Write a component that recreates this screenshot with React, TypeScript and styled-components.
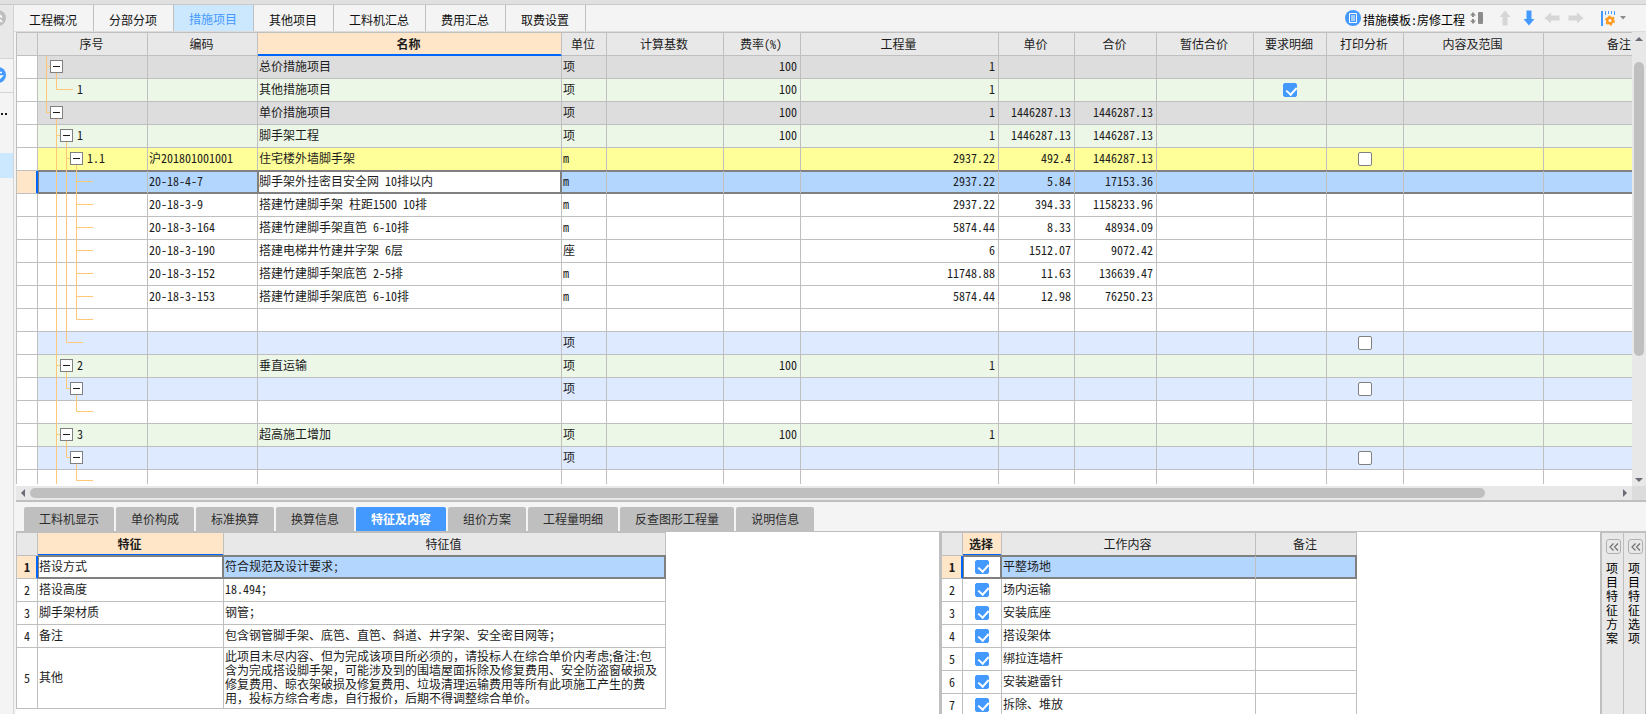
import React from "react";
import styled, { createGlobalStyle, css } from "styled-components";

const LINE = "#bfbfbf";
const DARK = "#808080";
const BLUE = "#4499ff";

const Global = createGlobalStyle`
  * { box-sizing: border-box; }
  html, body, #root { height: 100%; }
  body {
    margin: 0;
    overflow: hidden;
    background: #f4f4f4;
    color: #1c1c1c;
    font-family: "Noto Sans CJK SC", "Liberation Sans", sans-serif;
    font-size: 12px;
    line-height: 14px;
    font-feature-settings: "hwid";
    text-spacing-trim: space-all;
  }
  button { font: inherit; font-feature-settings: inherit; color: inherit; border: 0; padding: 0; background: none; }
`;

const Shell = styled.div`
  height: 100vh;
  display: flex;
  flex-direction: column;
`;
const TopStrip = styled.div`
  flex: 0 0 5px;
  background: #e0e0e0;
  border-bottom: 1px solid #cacaca;
`;
const Body = styled.div`
  flex: 1;
  min-height: 0;
  display: flex;
`;
const Rail = styled.aside`
  flex: 0 0 14px;
  border-right: 1px solid #d4d4d4;
  overflow: hidden;
`;
const RailSlot = styled.div<{ $h: number; $bg?: string; $line?: boolean }>`
  height: ${(p) => p.$h}px;
  background: ${(p) => p.$bg || "transparent"};
  border-bottom: ${(p) => (p.$line ? "1px solid #d4d4d4" : "0")};
  line-height: ${(p) => p.$h}px;
  svg { display: block; }
`;
const Main = styled.main`
  flex: 1;
  min-width: 0;
  display: flex;
  flex-direction: column;
`;
const Toolbar = styled.header`
  flex: 0 0 27px;
  display: flex;
  justify-content: space-between;
  border-bottom: 1px solid #dcdcdc;
`;
const Tabs = styled.nav`
  display: flex;
`;
const Tab = styled.button<{ $on?: boolean }>`
  padding: ${(p) => (p.$on ? "1px 16px 0 15px" : "3px 16px 0 15px")};
  border-right: 1px solid ${LINE};
  background: ${(p) => (p.$on ? "#cce8ff" : "transparent")};
  color: ${(p) => (p.$on ? BLUE : "#111")};
`;
const Tools = styled.div`
  display: flex;
  align-items: center;
  padding-right: 20px;
`;
const Template = styled.button`
  display: flex;
  align-items: center;
  gap: 2px;
  color: #000;
  margin-right: 12px;
  span { padding-top: 3px; margin-right: 3px; }
`;
const ToolButton = styled.button<{ $gap: number }>`
  display: flex;
  align-items: center;
  gap: 5px;
  margin-left: ${(p) => p.$gap}px;
`;

const UpperPane = styled.section`
  flex: 1;
  min-height: 0;
  display: flex;
  flex-direction: column;
  margin-left: 2px;
  border-bottom: 2px solid ${LINE};
`;
const GridRow = styled.div`
  flex: 1;
  min-height: 0;
  display: flex;
`;
const GridView = styled.div`
  flex: 1;
  min-width: 0;
  overflow: hidden;
  background: #fff;
  border-bottom: 2px solid #fff;
`;

const Table = styled.table<{ $w: number }>`
  table-layout: fixed;
  width: ${(p) => p.$w}px;
  border-collapse: separate;
  border-spacing: 0;
  border-top: 1px solid ${LINE};
  border-left: 1px solid ${LINE};
`;
const Th = styled.th<{ $on?: boolean }>`
  height: 23px;
  padding: 0 2px 0 0;
  border-right: 1px solid ${LINE};
  border-bottom: 1px solid ${LINE};
  background: #e8e8e8;
  font-weight: 400;
  ${(p) =>
    p.$on &&
    css`
      background: #ffe6c8;
      font-weight: 700;
      border-bottom-color: #0066ff;
      box-shadow: inset 0 -1px 0 #0066ff;
    `}
`;
const Td = styled.td<{ $align?: string }>`
  height: 23px;
  padding: 0 3px 2px 1px;
  line-height: 18px;
  border-right: 1px solid ${LINE};
  border-bottom: 1px solid ${LINE};
  text-align: ${(p) => p.$align || "left"};
  vertical-align: middle;
  white-space: nowrap;
`;
const BoxTd = styled(Td)`
  padding: 0;
`;
const ParagraphTd = styled(Td)`
  padding: 1px 4px 3px 1px;
  line-height: 14px;
  white-space: normal;
  font-feature-settings: normal;
`;
const HeadTd = styled(Td)`
  background: #fff;
  text-align: center;
  padding: 0;
`;
const Tr = styled.tr<{ $bg?: string; $sel?: boolean; $focus?: number }>`
  background: ${(p) => (p.$sel ? "#b3d6ff" : p.$bg || "#fff")};
  ${(p) =>
    p.$sel &&
    css`
      ${HeadTd} {
        background: #ffe6c8;
        font-weight: 700;
        border-right-color: #0066ff;
        box-shadow: inset -1px 0 0 #0066ff;
      }
      ${Td}:not(:first-child) {
        border-bottom-color: ${DARK};
        box-shadow: 0 -1px 0 ${DARK}, inset 0 1px 0 ${DARK}, inset 0 -1px 0 ${DARK};
      }
      ${Td}:nth-child(2) {
        box-shadow: 0 -1px 0 ${DARK}, inset 1px 1px 0 ${DARK}, inset 0 -1px 0 ${DARK};
      }
      ${Td}:last-child {
        border-right-color: ${DARK};
        box-shadow: 0 -1px 0 ${DARK}, inset 0 1px 0 ${DARK}, inset -1px -1px 0 ${DARK};
      }
      ${Td}:nth-child(${p.$focus}) {
        background: #fff;
        border-right-color: ${DARK};
        box-shadow: ${p.$focus === 2 ? "" : `-1px 0 0 ${DARK},`} 0 -1px 0 ${DARK}, inset 0 0 0 1px ${DARK};
      }
    `}
`;
const TreeBox = styled.div<{ $x: number }>`
  position: relative;
  display: flex;
  align-items: center;
  height: 22px;
  padding-left: ${(p) => p.$x}px;
`;
const Guides = styled.svg`
  position: absolute;
  left: 0;
  top: 0;
  overflow: visible;
`;
const Toggle = styled.button`
  position: relative;
  width: 13px;
  height: 13px;
  margin-bottom: 1px;
  border: 1px solid ${DARK};
  background: linear-gradient(#1c1c1c, #1c1c1c) center / 7px 1px no-repeat #fff;
`;
const TreeLabel = styled.span`
  margin: 0 0 2px 4px;
`;
const Check = styled.input`
  appearance: none;
  display: block;
  position: relative;
  width: 14px;
  height: 14px;
  margin: 0 auto;
  border: 1px solid ${DARK};
  border-radius: 2px;
  background: #fff;
  &:checked { background: ${BLUE}; border-color: ${BLUE}; }
  &:checked::after {
    content: "";
    position: absolute;
    left: 4px;
    top: 1px;
    width: 5px;
    height: 8px;
    border: solid #fff;
    border-width: 0 2px 2px 0;
    transform: rotate(42deg);
  }
`;

const VBar = styled.div`
  flex: 0 0 14px;
  display: flex;
  flex-direction: column;
  align-items: center;
  background: #e8e8e8;
  padding: 5px 0 4px;
`;
const VThumb = styled.div`
  width: 10px;
  height: 66%;
  margin: 21px 0 auto;
  border-radius: 5px;
  background: ${LINE};
`;
const HBar = styled.div`
  flex: 0 0 14px;
  display: flex;
  align-items: center;
  background: #e8e8e8;
`;
const HTrack = styled.div`
  flex: 1;
  display: flex;
  align-items: center;
  padding: 0 5px;
`;
const HThumb = styled.div`
  width: calc(91% - 6px);
  height: 10px;
  margin: 0 auto 0 5px;
  border-radius: 5px;
  background: ${LINE};
`;
const Corner = styled.div`
  width: 14px;
  height: 14px;
  background: #dcdcdc;
`;

const LowerPane = styled.section`
  flex: 0 0 212px;
  display: flex;
  flex-direction: column;
  min-height: 0;
  margin-left: 2px;
`;
const LowerTabs = styled.nav`
  display: flex;
  gap: 2px;
  height: 30px;
  padding: 5px 0 0 8px;
  border-bottom: 1px solid ${LINE};
`;
const LowerTab = styled.button<{ $on?: boolean }>`
  padding: 0 15px;
  border-radius: 2px 2px 0 0;
  background: ${(p) => (p.$on ? BLUE : LINE)};
  color: ${(p) => (p.$on ? "#fff" : "#2c2c2c")};
  font-weight: ${(p) => (p.$on ? 700 : 400)};
`;
const Panes = styled.div`
  flex: 1;
  min-height: 0;
  display: flex;
  background: #fff;
`;
const Pane = styled.div`
  flex: 1;
  min-width: 0;
  overflow: hidden;
`;
const WorkPane = styled.div`
  flex: 0 0 661px;
  border-left: 2px solid ${LINE};
  overflow: hidden;
`;
const SideTabs = styled.div`
  display: flex;
  border-left: 2px solid ${LINE};
  border-top: 1px solid ${LINE};
`;
const SideTab = styled.div`
  width: 22px;
  padding: 6px 2px 0 4px;
  background: #e8e8e8;
  border-right: 1px solid ${LINE};
  color: #000;
`;
const Expand = styled.button`
  display: flex;
  align-items: center;
  justify-content: center;
  width: 15px;
  height: 15px;
  border: 1px solid #b0b0b0;
  border-radius: 3px;
`;
const SideLabel = styled.div`
  width: 12px;
  margin-top: 7px;
  line-height: 14px;
  word-break: break-all;
`;

const columns: [string, number][] = [
  ["", 21], ["序号", 110], ["编码", 110], ["名称", 304], ["单位", 45],
  ["计算基数", 117], ["费率(%)", 77], ["工程量", 198], ["单价", 76], ["合价", 82],
  ["暂估合价", 97], ["要求明细", 73], ["打印分析", 77], ["内容及范围", 140], ["备注", 153],
];
const GREY = "#dddddd";
const GREEN = "#ecf7e7";
const YELLOW = "#ffff99";
const PALE = "#deeaff";

type Row = {
  bg?: string;
  guides: string;
  toggle?: number;
  no?: string;
  code?: string;
  name?: string;
  unit?: string;
  rate?: string;
  qty?: string;
  price?: string;
  total?: string;
  detail?: boolean;
  print?: boolean;
  sel?: boolean;
};

const leaf = "M18.5 0V23M28.5 0V23M38.5 0V23M38 10.5H55";
const rows: Row[] = [
  { bg: GREY, guides: "M8.5 0V23M8 10.5H12M18.5 17V23", toggle: 12, name: "总价措施项目", unit: "项", rate: "100", qty: "1" },
  { bg: GREEN, guides: "M8.5 0V23M18.5 0V10.5H35", no: "1", name: "其他措施项目", unit: "项", rate: "100", qty: "1", detail: true },
  { bg: GREY, guides: "M8.5 0V10.5H12M18.5 17V23", toggle: 12, name: "单价措施项目", unit: "项", rate: "100", qty: "1", price: "1446287.13", total: "1446287.13" },
  { bg: GREEN, guides: "M18.5 0V23M18 10.5H22M28.5 17V23", toggle: 22, no: "1", name: "脚手架工程", unit: "项", rate: "100", qty: "1", price: "1446287.13", total: "1446287.13" },
  { bg: YELLOW, guides: "M18.5 0V23M28.5 0V23M28 10.5H32M38.5 17V23", toggle: 32, no: "1.1", code: "沪201801001001", name: "住宅楼外墙脚手架", unit: "m", qty: "2937.22", price: "492.4", total: "1446287.13", print: true },
  { sel: true, guides: leaf, code: "20-18-4-7", name: "脚手架外挂密目安全网 10排以内", unit: "m", qty: "2937.22", price: "5.84", total: "17153.36" },
  { guides: leaf, code: "20-18-3-9", name: "搭建竹建脚手架 柱距1500 10排", unit: "m", qty: "2937.22", price: "394.33", total: "1158233.96" },
  { guides: leaf, code: "20-18-3-164", name: "搭建竹建脚手架直笆 6-10排", unit: "m", qty: "5874.44", price: "8.33", total: "48934.09" },
  { guides: leaf, code: "20-18-3-190", name: "搭建电梯井竹建井字架 6层", unit: "座", qty: "6", price: "1512.07", total: "9072.42" },
  { guides: leaf, code: "20-18-3-152", name: "搭建竹建脚手架底笆 2-5排", unit: "m", qty: "11748.88", price: "11.63", total: "136639.47" },
  { guides: leaf, code: "20-18-3-153", name: "搭建竹建脚手架底笆 6-10排", unit: "m", qty: "5874.44", price: "12.98", total: "76250.23" },
  { guides: "M18.5 0V23M28.5 0V23M38.5 0V10.5H55" },
  { bg: PALE, guides: "M18.5 0V23M28.5 0V10.5H45", unit: "项", print: true },
  { bg: GREEN, guides: "M18.5 0V23M18 10.5H22M28.5 17V23", toggle: 22, no: "2", name: "垂直运输", unit: "项", rate: "100", qty: "1" },
  { bg: PALE, guides: "M18.5 0V23M28.5 0V10.5H32M38.5 17V23", toggle: 32, unit: "项", print: true },
  { guides: "M18.5 0V23M38.5 0V10.5H55" },
  { bg: GREEN, guides: "M18.5 0V23M18 10.5H22M28.5 17V23", toggle: 22, no: "3", name: "超高施工增加", unit: "项", rate: "100", qty: "1" },
  { bg: PALE, guides: "M18.5 0V23M28.5 0V10.5H32M38.5 17V23", toggle: 32, unit: "项", print: true },
  { guides: "M18.5 0V23M38.5 0V10.5H55" },
];

const features: [string, string][] = [
  ["搭设方式", "符合规范及设计要求;"],
  ["搭设高度", "18.494；"],
  ["脚手架材质", "钢管；"],
  ["备注", "包含钢管脚手架、底笆、直笆、斜道、井字架、安全密目网等；"],
  ["其他", "此项目未尽内容、但为完成该项目所必须的，请投标人在综合单价内考虑;备注:包含为完成搭设脚手架，可能涉及到的围墙屋面拆除及修复费用、安全防盗窗破损及修复费用、晾衣架破损及修复费用、垃圾清理运输费用等所有此项施工产生的费用，投标方综合考虑，自行报价，后期不得调整综合单价。"],
];
const works = ["平整场地", "场内运输", "安装底座", "搭设架体", "绑拉连墙杆", "安装避雷针", "拆除、堆放"];

const Cols = ({ widths }: { widths: number[] }) => (
  <colgroup>
    {widths.map((w, i) => (
      <col key={i} width={w} />
    ))}
  </colgroup>
);

const Arrow = ({ dir, color }: { dir: number; color: string }) => (
  <svg width="16" height="16" viewBox="0 0 16 16">
    <path d="M8 0.5L13.5 7H10.5V15.5H5.5V7H2.5Z" fill={color} transform={`rotate(${dir} 8 8)`} />
  </svg>
);
const Tri = ({ d, w, h }: { d: string; w: number; h: number }) => (
  <svg width={w} height={h}>
    <path d={d} fill="#6b6b78" />
  </svg>
);

const MeasureTable = () => (
  <Table $w={1681}>
    <Cols widths={columns.map((c) => c[1])} />
    <thead>
      <tr>
        {columns.map(([label], i) => (
          <Th key={i} $on={label === "名称"}>{label}</Th>
        ))}
      </tr>
    </thead>
    <tbody>
      {rows.map((r, i) => (
        <Tr key={i} $bg={r.bg} $sel={r.sel} $focus={4}>
          <HeadTd />
          <BoxTd>
            <TreeBox $x={r.toggle ?? 35}>
              <Guides width="110" height="22">
                <path d={r.guides} fill="none" stroke="#ffc878" />
              </Guides>
              {r.toggle && <Toggle aria-label="折叠" />}
              {r.no && <TreeLabel>{r.no}</TreeLabel>}
            </TreeBox>
          </BoxTd>
          <Td>{r.code}</Td>
          <Td>{r.name}</Td>
          <Td>{r.unit}</Td>
          <Td />
          <Td $align="right">{r.rate}</Td>
          <Td $align="right">{r.qty}</Td>
          <Td $align="right">{r.price}</Td>
          <Td $align="right">{r.total}</Td>
          <Td />
          <BoxTd>{r.detail && <Check type="checkbox" aria-label="要求明细" defaultChecked />}</BoxTd>
          <BoxTd>{r.print && <Check type="checkbox" aria-label="打印分析" />}</BoxTd>
          <Td />
          <Td />
        </Tr>
      ))}
    </tbody>
  </Table>
);

const upperTabs = ["工程概况", "分部分项", "措施项目", "其他项目", "工料机汇总", "费用汇总", "取费设置"];
const lowerTabs = ["工料机显示", "单价构成", "标准换算", "换算信息", "特征及内容", "组价方案", "工程量明细", "反查图形工程量", "说明信息"];

export default function App() {
  return (
    <Shell>
      <Global />
      <TopStrip />
      <Body>
        <Rail>
          <RailSlot $h={54} $bg="#e8e8e8" $line>
            <svg width="13" height="27">
              <circle cx="-2" cy="13" r="8" fill="#bfbfbf" />
              <path d="M-5 12.5L-1.5 9L2 12.5M-5 17L-1.5 13.5L2 17" fill="none" stroke="#fff" strokeWidth="1.6" />
            </svg>
          </RailSlot>
          <RailSlot $h={34} $line>
            <svg width="13" height="32">
              <circle cx="-2" cy="16" r="8" fill={BLUE} />
              <path d="M-5 13.5H2M-1 17H2L-1 20" fill="none" stroke="#fff" strokeWidth="1.6" />
            </svg>
          </RailSlot>
          <RailSlot $h={60}>
            <svg width="13" height="30">
              <path d="M1 20h2v2h-2zM5 20h2v2h-2z" fill="#1c1c1c" />
            </svg>
          </RailSlot>
          <RailSlot $h={25} $bg="#cce8ff" />
        </Rail>
        <Main>
          <Toolbar>
            <Tabs>
              {upperTabs.map((t) => (
                <Tab key={t} $on={t === "措施项目"}>{t}</Tab>
              ))}
            </Tabs>
            <Tools>
              <Template>
                <svg width="16" height="16">
                  <circle cx="8" cy="8" r="8" fill={BLUE} />
                  <path d="M4.5 3.5h7v9h-7zM6 6h4M6 8h4M6 10h4" fill="none" stroke="#fff" />
                </svg>
                <span>措施模板:房修工程</span>
                <svg width="13" height="14">
                  <path d="M0 4.5L3 1L6 4.5H4V6H2V4.5ZM0 9.5H2V8H4V9.5H6L3 13Z" fill="#8c8c8c" />
                  <rect x="8" y="1" width="5" height="12" rx="1" fill="#8c8c8c" />
                </svg>
              </Template>
              <ToolButton $gap={2} aria-label="上移"><Arrow dir={0} color="#d6d6d6" /></ToolButton>
              <ToolButton $gap={8} aria-label="下移"><Arrow dir={180} color={BLUE} /></ToolButton>
              <ToolButton $gap={7} aria-label="左移"><Arrow dir={270} color="#d6d6d6" /></ToolButton>
              <ToolButton $gap={8} aria-label="右移"><Arrow dir={90} color="#d6d6d6" /></ToolButton>
              <ToolButton $gap={17} aria-label="设置">
                <svg width="14" height="16">
                  <path d="M1 1V16" stroke={BLUE} strokeWidth="2" />
                  <path d="M4.5 1V5M7.5 1V4M10.5 1V4M13.5 1V5" stroke={BLUE} />
                  <circle cx="9" cy="10.5" r="2.8" fill="none" stroke="#ff9a1f" strokeWidth="2.4" />
                  <circle cx="9" cy="10.5" r="4.2" fill="none" stroke="#ff9a1f" strokeWidth="1.6" strokeDasharray="2.2 2.2" />
                </svg>
                <svg width="6" height="4"><path d="M0 0H6L3 3.5Z" fill="#8c8c8c" /></svg>
              </ToolButton>
            </Tools>
          </Toolbar>

          <UpperPane>
            <GridRow>
              <GridView><MeasureTable /></GridView>
              <VBar>
                <Tri w={8} h={4} d="M0 4H8L4 0Z" />
                <VThumb />
                <Tri w={8} h={4} d="M0 0H8L4 4Z" />
              </VBar>
            </GridRow>
            <HBar>
              <HTrack>
                <Tri w={4} h={8} d="M4 0V8L0 4Z" />
                <HThumb />
                <Tri w={4} h={8} d="M0 0V8L4 4Z" />
              </HTrack>
              <Corner />
            </HBar>
          </UpperPane>

          <LowerPane>
            <LowerTabs>
              {lowerTabs.map((t) => (
                <LowerTab key={t} $on={t === "特征及内容"}>{t}</LowerTab>
              ))}
            </LowerTabs>
            <Panes>
              <Pane>
                <Table $w={650}>
                  <Cols widths={[21, 186, 442]} />
                  <thead>
                    <tr><Th /><Th $on>特征</Th><Th>特征值</Th></tr>
                  </thead>
                  <tbody>
                    {features.map(([k, v], i) => (
                      <Tr key={k} $sel={i === 0} $focus={2}>
                        <HeadTd>{i + 1}</HeadTd>
                        <Td>{k}</Td>
                        {i === 4 ? <ParagraphTd>{v}</ParagraphTd> : <Td>{v}</Td>}
                      </Tr>
                    ))}
                  </tbody>
                </Table>
              </Pane>
              <WorkPane>
                <Table $w={416}>
                  <Cols widths={[21, 39, 254, 101]} />
                  <thead>
                    <tr><Th /><Th $on>选择</Th><Th>工作内容</Th><Th>备注</Th></tr>
                  </thead>
                  <tbody>
                    {works.map((w, i) => (
                      <Tr key={w} $sel={i === 0} $focus={2}>
                        <HeadTd>{i + 1}</HeadTd>
                        <BoxTd><Check type="checkbox" aria-label={w} defaultChecked /></BoxTd>
                        <Td>{w}</Td>
                        <Td />
                      </Tr>
                    ))}
                  </tbody>
                </Table>
              </WorkPane>
              <SideTabs>
                {["项目特征方案", "项目特征选项"].map((t) => (
                  <SideTab key={t}>
                    <Expand aria-label={t}>
                      <svg width="10" height="8">
                        <path d="M4.5 0.5L1 4L4.5 7.5M9 0.5L5.5 4L9 7.5" fill="none" stroke="#707070" strokeWidth="1.2" />
                      </svg>
                    </Expand>
                    <SideLabel>{t}</SideLabel>
                  </SideTab>
                ))}
              </SideTabs>
            </Panes>
          </LowerPane>
        </Main>
      </Body>
    </Shell>
  );
}
